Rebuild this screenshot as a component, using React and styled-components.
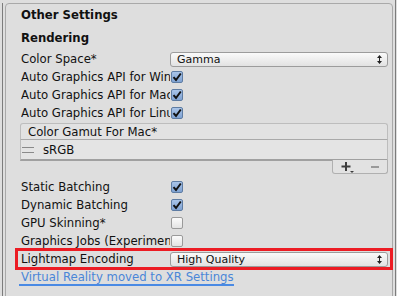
import React from 'react'
import styled, { createGlobalStyle } from 'styled-components'

const Global = createGlobalStyle`
    html, body {
        margin: 0;
        padding: 0;
        background: #dedede;
        font-family: "DejaVu Sans", Verdana, sans-serif;
        font-size: 11.7px;
        color: #111;
    }
`

const Window = styled.div`
    width: 397px;
    height: 296px;
    overflow: hidden;
    box-sizing: border-box;
    padding: 3px 0 0 2px;
    display: flex;
`

const Edge = styled.div`
    width: 1px;
    background: #7c7c7c;
    flex: none;
`

const Frame = styled.div`
    margin-left: 2px;
    width: 388px;
    height: 320px;
    box-sizing: border-box;
    border: 1px solid #a9a9a9;
    border-radius: 4px;
    padding: 4px 4px 0 15px;
    flex: none;
`

const RightEdge = styled(Edge)`
    margin-left: 2px;
    margin-top: -3px;
`

const Title = styled.div`
    font-weight: bold;
    line-height: 15px;
    height: 15px;
    margin-bottom: ${(p) => p.gap || 0}px;
`

const Row = styled.div`
    display: flex;
    align-items: center;
    height: 18px;
`

const Label = styled.div`
    width: 149px;
    flex: none;
    white-space: nowrap;
    overflow: hidden;
`

const Select = styled.div`
    flex: 1;
    height: 13px;
    border: 1px solid #9c9c9c;
    border-radius: 3px;
    background: linear-gradient(#fafafa, #e2e2e2);
    display: flex;
    align-items: center;
    padding: 0 5px 0 6px;
    font-size: 11px;
    justify-content: space-between;
`

const Box = styled.div`
    width: 10px;
    height: 10px;
    margin-left: 1px;
    border: 1px solid ${(p) => (p.on ? '#5e7ca3' : '#9a9a9a')};
    border-radius: 2px;
    background: ${(p) => (p.on ? 'linear-gradient(#a9c4e8, #7fa2d2)' : 'linear-gradient(#fbfbfb, #e3e3e3)')};
    display: flex;
    align-items: center;
    justify-content: center;
`

const List = styled.div`
    margin: 1px 0 0 -1px;
    display: flex;
    flex-direction: column;
`

const ListHead = styled.div`
    height: 15px;
    border: 1px solid #bdbdbd;
    border-bottom-color: #a9a9a9;
    border-radius: 3px 3px 0 0;
    background: #e2e2e2;
    padding-left: 7px;
    display: flex;
    align-items: center;
`

const ListBody = styled.div`
    height: 19px;
    border: 1px solid #bdbdbd;
    border-top: none;
    border-bottom: 2px solid #a0a0a0;
    background: #e4e4e4;
    display: flex;
    align-items: center;
    padding-left: 1px;
`

const Handle = styled.span`
    width: 12px;
    height: 4px;
    margin: 1px 9px 0 0;
    border-top: 1px solid #8a8a8a;
    border-bottom: 1px solid #8a8a8a;
`

const ListFoot = styled.div`
    align-self: flex-end;
    width: 54px;
    height: 13px;
    margin-top: -1px;
    border: 1px solid #b0b0b0;
    border-top: none;
    border-radius: 0 0 3px 3px;
    background: #e2e2e2;
    display: flex;
    align-items: center;
    justify-content: space-around;
`

const Spacer = styled.div`
    height: ${(p) => p.h}px;
`

const Highlight = styled.div`
    margin: -2px 0 0 -6px;
    width: 378px;
    box-sizing: border-box;
    border: 3px solid #ec1c24;
    padding: 0 2px 0 3px;
    height: 22px;
    display: flex;
    align-items: center;
`

const HiRow = styled(Row)`
    width: 100%;
    height: 16px;
`

const LinkText = styled.a`
    display: inline-block;
    color: #4a86d8;
    text-decoration: none;
    border-bottom: 2px solid #4a8ae4;
    line-height: 14px;
    margin-left: -2px;
    padding: 0 0 0 2px;
`

const Check = () => (
    <svg width="10" height="10" viewBox="0 0 10 10">
        <path d="M1.5 5.2 L4 8 L8.8 1.5" stroke="#111" strokeWidth="2" fill="none" />
    </svg>
)

const Arrows = () => (
    <svg width="5" height="9" viewBox="0 0 5 9">
        <path d="M2.5 0 L5 3 H0 Z M2.5 9 L5 6 H0 Z" fill="#222" />
        <path d="M2.5 3 V6" stroke="#222" strokeWidth="1" />
    </svg>
)

const Plus = () => (
    <svg width="14" height="12" viewBox="0 0 14 12">
        <path d="M5 1 V10 M0.5 5.5 H9.5" stroke="#3c3c3c" strokeWidth="2" />
        <path d="M9 10 H13 L11 12 Z" fill="#3c3c3c" />
    </svg>
)

const Minus = () => (
    <svg width="10" height="4" viewBox="0 0 10 4">
        <path d="M1 2 H9" stroke="#9a9a9a" strokeWidth="2" />
    </svg>
)

const toggles = [
    ['Auto Graphics API for Windows', true],
    ['Auto Graphics API for Mac', true],
    ['Auto Graphics API for Linux', true],
]

const batching = [
    ['Static Batching', true],
    ['Dynamic Batching', true],
    ['GPU Skinning*', false],
    ['Graphics Jobs (Experimental)', false],
]

const App = function () {
    return (
        <Window>
            <Global />
            <Edge />
            <Frame>
                <Title gap={8}>Other Settings</Title>
                <Title gap={4}>Rendering</Title>
                <Row>
                    <Label>Color Space*</Label>
                    <Select>
                        Gamma
                        <Arrows />
                    </Select>
                </Row>
                {toggles.map(([name, on]) => (
                    <Row key={name}>
                        <Label>{name}</Label>
                        <Box on={on}>{on && <Check />}</Box>
                    </Row>
                ))}
                <List>
                    <ListHead>Color Gamut For Mac*</ListHead>
                    <ListBody>
                        <Handle />
                        sRGB
                    </ListBody>
                    <ListFoot>
                        <Plus />
                        <Minus />
                    </ListFoot>
                </List>
                <Spacer h={4} />
                {batching.map(([name, on]) => (
                    <Row key={name}>
                        <Label>{name}</Label>
                        <Box on={on}>{on && <Check />}</Box>
                    </Row>
                ))}
                <Highlight>
                    <HiRow>
                        <Label>Lightmap Encoding</Label>
                        <Select>
                            High Quality
                            <Arrows />
                        </Select>
                    </HiRow>
                </Highlight>
                <LinkText href="#">Virtual Reality moved to XR Settings</LinkText>
            </Frame>
            <RightEdge />
        </Window>
    )
}

export default App
